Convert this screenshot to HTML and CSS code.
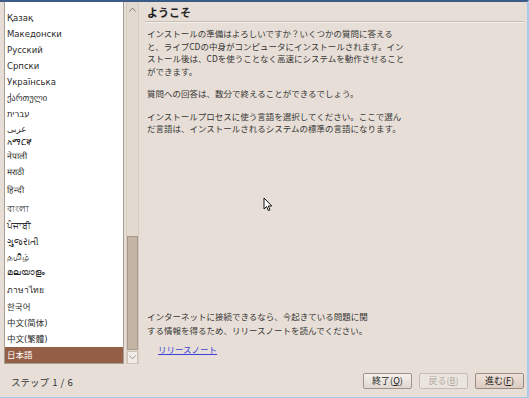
FILE: index.html
```html
<!DOCTYPE html>
<html>
  <head>
    <title>インストール</title>
    <link rel="stylesheet" href="styles.css">
  </head>
  <body>
    <div class="window">
      <div class="main">
        <div class="sidebar">
          <ul class="lang-list">
            <li class="row first">Български</li>
            <li class="row">Қазақ</li>
            <li class="row">Македонски</li>
            <li class="row">Русский</li>
            <li class="row">Српски</li>
            <li class="row">Українська</li>
            <li class="row">ქართული</li>
            <li class="row">עברית</li>
            <li class="row h14">عربی</li>
            <li class="row h13">አማርኛ</li>
            <li class="row h15">नेपाली</li>
            <li class="row h17">मराठी</li>
            <li class="row h19">हिन्दी</li>
            <li class="row h18">বাংলা</li>
            <li class="row h17">ਪੰਜਾਬੀ</li>
            <li class="row h15">ગુજરાતી</li>
            <li class="row h14">தமிழ்</li>
            <li class="row h17">മലയാളം</li>
            <li class="row h18">ภาษาไทย</li>
            <li class="row" lang="ko">한국어</li>
            <li class="row" lang="zh-CN">中文(简体)</li>
            <li class="row" lang="zh-TW">中文(繁體)</li>
            <li class="row selected" lang="ja">日本語</li>
          </ul>
          <div class="scrollbar">
            <div class="stepper">
              <svg width="7" height="5" viewBox="0 0 7 5"><path d="M0.5 4.5 L3.5 1 L6.5 4.5" fill="none" stroke="#8a8078" stroke-width="1"/></svg>
            </div>
            <div class="trough">
              <div class="thumb"></div>
            </div>
            <div class="stepper down">
              <svg width="7" height="5" viewBox="0 0 7 5"><path d="M0.5 0.5 L3.5 4 L6.5 0.5" fill="none" stroke="#a89e96" stroke-width="1"/></svg>
            </div>
          </div>
        </div>

        <div class="content">
          <h1 class="title">ようこそ</h1>
          <div class="intro">
            <p>インストールの準備はよろしいですか？いくつかの質問に答える<br>と、ライブCDの中身がコンピュータにインストールされます。イン<br>ストール後は、CDを使うことなく高速にシステムを動作させること<br>ができます。</p>
            <p>質問への回答は、数分で終えることができるでしょう。</p>
            <p>インストールプロセスに使う言語を選択してください。ここで選ん<br>だ言語は、インストールされるシステムの標準の言語になります。</p>
          </div>
          <div class="notes">
            <p>インターネットに接続できるなら、今起きている問題に関<br>する情報を得るため、リリースノートを読んでください。</p>
            <a class="release-link" href="#">リリースノート</a>
          </div>
        </div>
      </div>

      <div class="footer">
        <span class="step">ステップ 1 / 6</span>
        <div class="buttons">
          <button type="button" class="btn">終了(<u>Q</u>)</button>
          <button type="button" class="btn" disabled>戻る(<u>B</u>)</button>
          <button type="button" class="btn default">進む(<u>F</u>)</button>
        </div>
      </div>

      <svg class="cursor" width="10" height="15" viewBox="0 0 10 15">
        <path d="M1 1 L1 12 L3.6 9.6 L5.4 13.6 L7 12.9 L5.3 9 L8.8 9 Z" fill="#fff" stroke="#111" stroke-width="1" stroke-linejoin="round"/>
      </svg>
    </div>
  </body>
</html>
```

FILE: styles.css
```css
html,
body {
  margin: 0;
  padding: 0;
}
body {
  width: 529px;
  height: 398px;
  overflow: hidden;
  background-color: #e7dfd7;
  font-family: "DejaVu Sans", "Noto Sans CJK JP", sans-serif;
  color: #333;
}
.window {
  position: relative;
  box-sizing: border-box;
  width: 529px;
  height: 398px;
  display: flex;
  flex-direction: column;
  border-top: 2px solid #3b5b86;
  border-right: 2px solid #a9c9ea;
  border-bottom: 1px solid #a9c9ea;
}
.main {
  flex: 1;
  display: flex;
  min-height: 0;
}
.sidebar {
  width: 136px;
  display: flex;
  padding: 0 0 1px 4px;
}
.lang-list {
  list-style: none;
  margin: 0;
  padding: 0;
  width: 118px;
  background-color: #fff;
  border: 1px solid #a89d93;
  border-top: none;
  overflow: hidden;
}
.row {
  height: 16px;
  line-height: 16px;
  padding-left: 2px;
  font-size: 8.5px;
  color: #2a2a2a;
  white-space: nowrap;
}
/* scrolled list: only the bottom sliver of this row shows */
.row.first {
  margin-top: -8px;
  line-height: 6px;
  overflow: hidden;
}
.row.h13 { height: 13px; line-height: 13px; }
.row.h14 { height: 14px; line-height: 14px; }
.row.h15 { height: 15px; line-height: 15px; }
.row.h17 { height: 17px; line-height: 17px; }
.row.h18 { height: 18px; line-height: 18px; }
.row.h19 { height: 19px; line-height: 19px; }
.row.selected {
  background-color: #955f47;
  color: #fff;
}
.scrollbar {
  width: 11px;
  margin-left: 2px;
  display: flex;
  flex-direction: column;
  background-color: #e2d9d0;
  border-left: 1px solid #d6ccc2;
  border-right: 1px solid #d6ccc2;
}
.stepper {
  height: 14px;
  display: flex;
  align-items: center;
  justify-content: center;
}
.stepper.down {
  height: 11px;
  background-color: #f0ebe6;
  border: 1px solid #cdc3b9;
}
.trough {
  flex: 1;
  display: flex;
  flex-direction: column;
  justify-content: flex-end;
}
.thumb {
  height: 112px;
  margin: 0 0 1px;
  background-color: #c4b4a4;
  border: 1px solid #a9998a;
}
.content {
  flex: 1;
  display: flex;
  flex-direction: column;
  margin: 0 3px 0 5px;
  padding-bottom: 9px;
  font-family: "Noto Sans CJK JP", "DejaVu Sans", sans-serif;
}
.title {
  margin: 0;
  height: 19px;
  line-height: 20px;
  padding-left: 2px;
  font-size: 11px;
  font-weight: bold;
  color: #222;
  border-bottom: 1px solid #c9beb3;
  box-shadow: 0 1px 0 #f3efeb;
}
.intro {
  margin-top: 5px;
  padding-left: 2px;
}
.intro p {
  margin: 0 0 10px;
  font-size: 8.5px;
  line-height: 12.5px;
  white-space: nowrap;
  color: #363636;
}
.notes {
  margin-top: auto;
  padding-left: 2px;
  font-size: 8.5px;
}
.notes p {
  margin: 0 0 6px;
  line-height: 14px;
  white-space: nowrap;
  color: #363636;
}
.release-link {
  display: inline-block;
  margin-left: 11px;
  line-height: 13px;
  color: #4040dc;
}
.footer {
  height: 32px;
  display: flex;
  align-items: center;
  justify-content: space-between;
  padding: 0 3px 0 11px;
  font-family: "Noto Sans CJK JP", "DejaVu Sans", sans-serif;
}
.step {
  font-size: 9.5px;
  word-spacing: 1px;
  color: #333;
  margin-top: 2px;
}
.buttons {
  display: flex;
  gap: 7px;
}
.btn {
  width: 49px;
  height: 16px;
  padding: 0;
  font-family: "Noto Sans CJK JP", "DejaVu Sans", sans-serif;
  font-size: 9px;
  line-height: 14px;
  color: #222;
  background: linear-gradient(#f4f0ec, #e0d8d0);
  border: 1px solid #9d938a;
  border-radius: 2px;
}
.btn:disabled {
  color: #b3aaa2;
  border-color: #c4bbb2;
  background: #ebe5df;
}
.btn.default {
  background: linear-gradient(#eee2da, #dccbc0);
  border-color: #9b8c82;
}
.cursor {
  position: absolute;
  left: 263px;
  top: 195px;
}
```
